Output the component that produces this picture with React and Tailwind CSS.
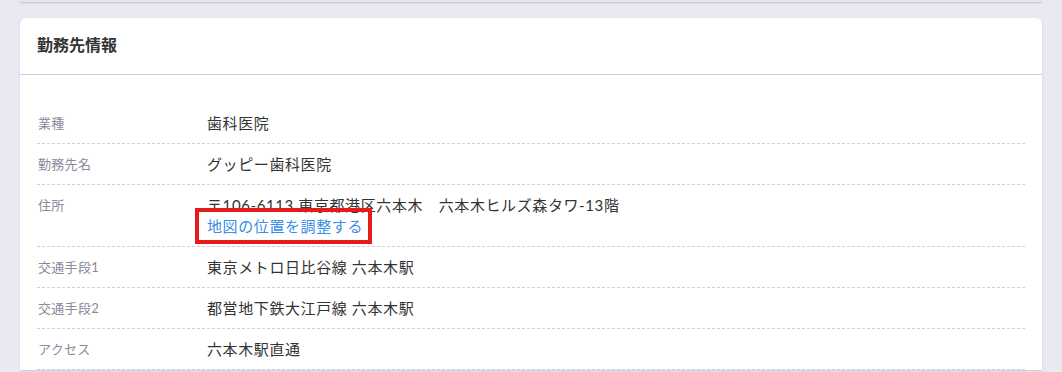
import React from 'react';

const rows = [
  { label: '業種', value: '歯科医院' },
  { label: '勤務先名', value: 'グッピー歯科医院' },
  { label: '住所', value: '〒106-6113 東京都港区六本木　六本木ヒルズ森タワ-13階', link: '地図の位置を調整する' },
  { label: '交通手段1', value: '東京メトロ日比谷線 六本木駅' },
  { label: '交通手段2', value: '都営地下鉄大江戸線 六本木駅' },
  { label: 'アクセス', value: '六本木駅直通' },
];

export default function App() {
  return (
    <div
      className="w-[1062px] h-[372px] overflow-hidden bg-[#e9e9f2]"
      style={{ fontFamily: 'Lato, "Noto Sans CJK JP", "Noto Sans", sans-serif' }}
    >
      {/* previous card tail */}
      <div className="mx-5 h-[2px] bg-[#e4e4ee] rounded-b-md shadow-[0_1px_2px_rgba(0,0,0,0.2)]"></div>

      <div className="mx-5 mt-4 bg-white rounded-t-md shadow-[0_1px_2px_rgba(0,0,0,0.15)]">
        <div className="h-[57px] px-[17px] flex items-center border-b border-[#cfcddc]">
          <h2 className="text-[16px] font-bold text-[#333] pb-[2px]">勤務先情報</h2>
        </div>

        <div className="px-[17px] pt-[28px]">
          {rows.map((row) => (
            <div key={row.label} className="flex pt-[10px] pb-[9px] border-b border-dashed border-[#cfcfd8] leading-[21px]">
              <div className="w-[170px] shrink-0 pl-[1px] text-[13px] tracking-[0.3px] text-[#8a8a9c]">{row.label}</div>
              <div className="text-[15px] tracking-[0.6px] text-[#333]">
                <div>{row.value}</div>
                {row.link && (
                  <div>
                    <span className="relative inline-block text-[#3a8ee6]">
                      {row.link}
                      <span className="absolute left-[-12px] right-[-9px] top-[-8px] bottom-[-7px] border-4 border-[#e31b1b]"></span>
                    </span>
                  </div>
                )}
              </div>
            </div>
          ))}
        </div>
      </div>
    </div>
  );
}
